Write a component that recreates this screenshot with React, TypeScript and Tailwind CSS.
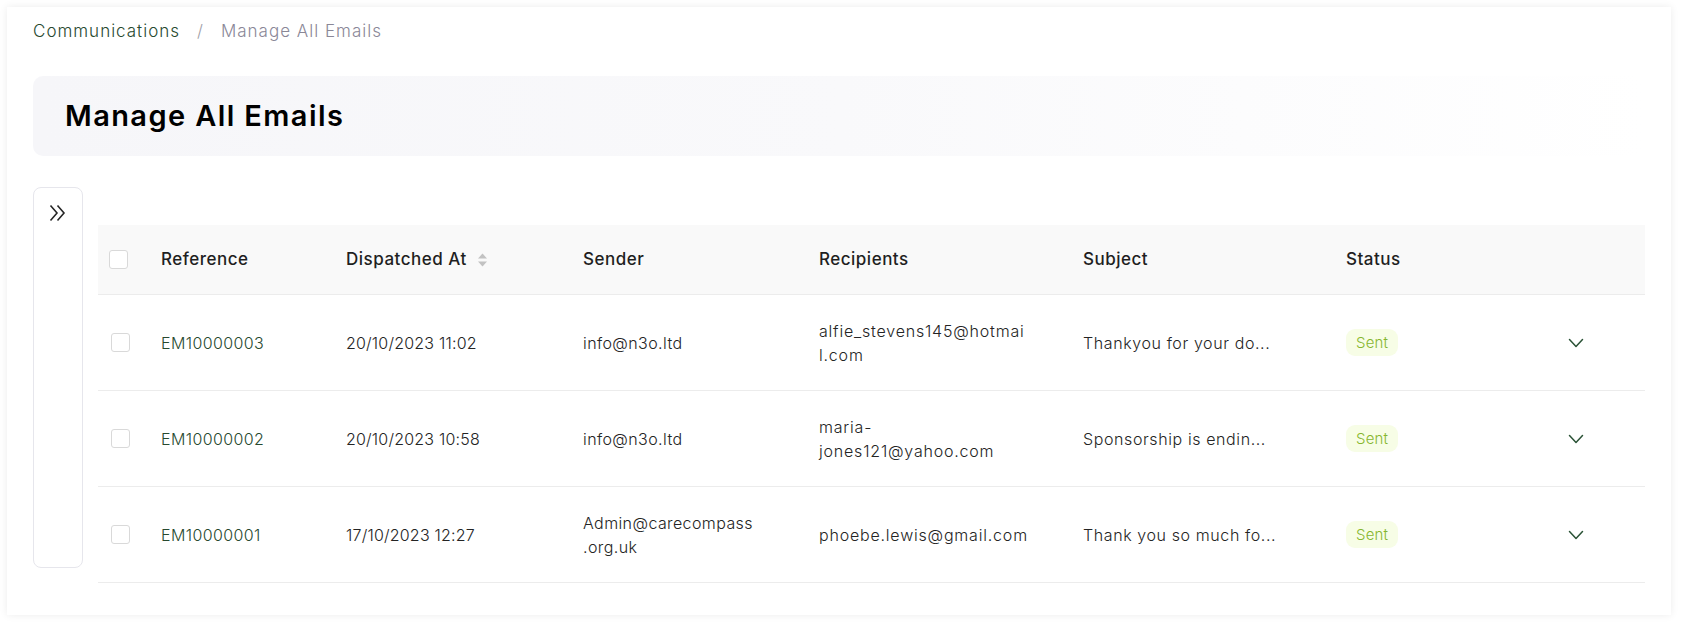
import React from "react";

type Row = {
  ref: string;
  date: string;
  sender: React.ReactNode;
  recipients: React.ReactNode;
  subject: string;
};

const rows: Row[] = [
  {
    ref: "EM10000003",
    date: "20/10/2023 11:02",
    sender: "info@n3o.ltd",
    recipients: (
      <>
        alfie_stevens145@hotmai
        <br />
        l.com
      </>
    ),
    subject: "Thankyou for your do...",
  },
  {
    ref: "EM10000002",
    date: "20/10/2023 10:58",
    sender: "info@n3o.ltd",
    recipients: (
      <>
        maria-
        <br />
        jones121@yahoo.com
      </>
    ),
    subject: "Sponsorship is endin...",
  },
  {
    ref: "EM10000001",
    date: "17/10/2023 12:27",
    sender: (
      <>
        Admin@carecompass
        <br />
        .org.uk
      </>
    ),
    recipients: "phoebe.lewis@gmail.com",
    subject: "Thank you so much fo...",
  },
];

const cols =
  "grid grid-cols-[63px_185px_237px_236px_264px_263px_222px_1fr] items-center";

function Checkbox({ className = "" }: { className?: string }) {
  return (
    <div
      className={`h-[19px] w-[19px] rounded-[3px] border border-[#d9d9d9] bg-white ${className}`}
    />
  );
}

function SortIcon() {
  return (
    <svg width="11" height="16" viewBox="0 0 11 16" className="ml-[10px]">
      <path d="M5.5 1.5 L10 6.5 H1 Z" fill="#c2c2c2" />
      <path d="M5.5 14.5 L10 9.5 H1 Z" fill="#c2c2c2" />
    </svg>
  );
}

function ChevronDown() {
  return (
    <svg width="16" height="10" viewBox="0 0 16 10" fill="none">
      <path
        d="M1.5 1.5 L8 8.5 L14.5 1.5"
        stroke="#2a5236"
        strokeWidth="1.5"
        strokeLinecap="round"
        strokeLinejoin="round"
      />
    </svg>
  );
}

function DoubleRight() {
  return (
    <svg width="20" height="18" viewBox="0 0 20 18" fill="none">
      <path
        d="M2.5 1.5 L9 9 L2.5 16.5"
        stroke="#262626"
        strokeWidth="1.6"
        strokeLinejoin="miter"
      />
      <path
        d="M9.5 1.5 L16 9 L9.5 16.5"
        stroke="#262626"
        strokeWidth="1.6"
        strokeLinejoin="miter"
      />
    </svg>
  );
}

export default function App() {
  return (
    <div className="min-h-screen bg-white pl-[7px] pt-[7px] font-['Inter',sans-serif] text-[#242424]">
      <div className="w-[1664px] h-[608px] bg-white shadow-[0_0_8px_rgba(0,0,0,0.08)] pl-[26px] pr-[26px]">
        {/* Breadcrumb */}
        <div className="flex items-center h-[46px] pt-[4px] text-[17px] font-light tracking-[1px]">
          <span className="text-[#27492f]">Communications</span>
          <span className="mx-[17px] text-[#a0a0a8]">/</span>
          <span className="text-[#8a8797]">Manage All Emails</span>
        </div>

        {/* Header box */}
        <div className="mt-[23px] h-[80px] rounded-[10px] bg-linear-to-r from-[#f6f6f9] via-[#f9f9fb] to-[#ffffff] flex items-center pl-[32px]">
          <h1 className="text-[29px] font-semibold text-black tracking-[1.4px]">
            Manage All Emails
          </h1>
        </div>

        {/* Content */}
        <div className="mt-[31px] flex">
          <div className="w-[50px] h-[381px] rounded-[8px] border border-[#e6e6ec] bg-white flex justify-center pt-[16px]">
            <DoubleRight />
          </div>

          <div className="ml-[15px] flex-1 pt-[38px]">
            {/* Header row */}
            <div
              className={`${cols} h-[70px] bg-[#f9f9f9] border-b border-[#ececec] text-[17px] font-medium tracking-[0.5px] text-[#1f1f1f]`}
            >
              <div className="pl-[11px]">
                <Checkbox />
              </div>
              <div>Reference</div>
              <div className="flex items-center">
                Dispatched At
                <SortIcon />
              </div>
              <div>Sender</div>
              <div>Recipients</div>
              <div>Subject</div>
              <div>Status</div>
              <div />
            </div>

            {rows.map((r) => (
              <div
                key={r.ref}
                className={`${cols} h-[96px] border-b border-[#ececec] text-[16px] font-light leading-[24px] tracking-[0.4px]`}
              >
                <div className="pl-[13px]">
                  <Checkbox />
                </div>
                <div className="text-[#27492f]">{r.ref}</div>
                <div className="tracking-[0.2px]">{r.date}</div>
                <div>{r.sender}</div>
                <div className="tracking-[0.8px]">{r.recipients}</div>
                <div className="tracking-[0.6px]">{r.subject}</div>
                <div>
                  <span className="inline-flex items-center h-[27px] px-[10px] rounded-[9px] bg-[#f7fde6] text-[#86b62e] text-[15px] tracking-[0.2px]">
                    Sent
                  </span>
                </div>
                <div>
                  <ChevronDown />
                </div>
              </div>
            ))}
          </div>
        </div>
      </div>
    </div>
  );
}
